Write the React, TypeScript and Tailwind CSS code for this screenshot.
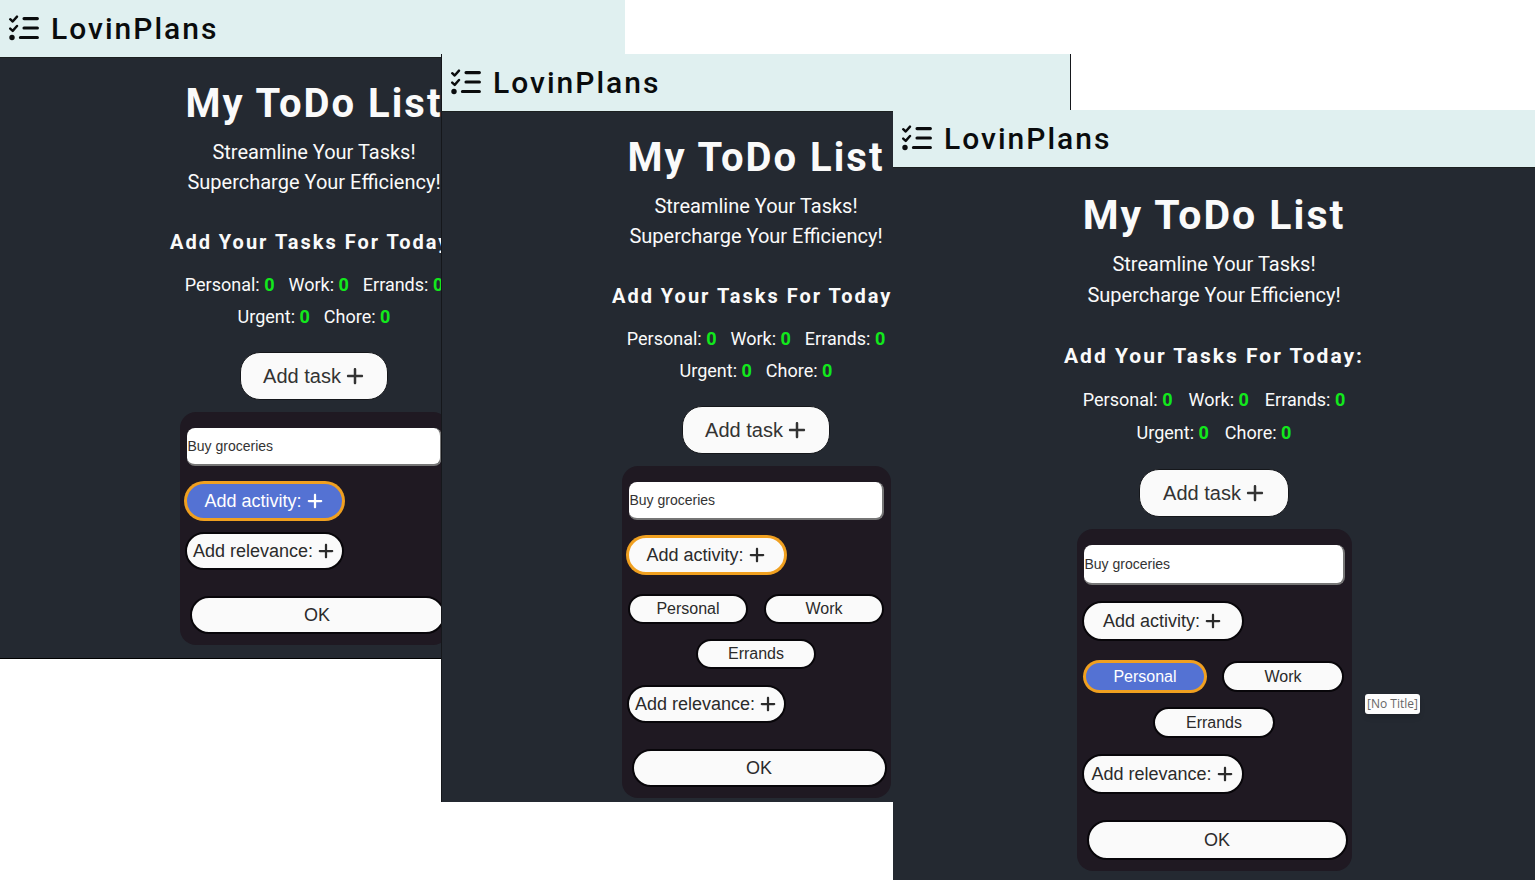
import { useId } from 'react';
import clsx from 'clsx';
import { FaPlus } from 'react-icons/fa6';

const pill = 'flex items-center justify-center rounded-full border-2 outline-none';
const plain = 'border-[#08060a] bg-[#fafafa] text-[#2b2b2b]';
const focused = 'border-[#f0a020] bg-[#fafafa] text-[#2b2b2b] ring-1 ring-[#f0a020]';
const picked = 'border-[#f0a020] bg-[#5472d3] text-white ring-1 ring-[#f0a020]';

type Focus = 'activity-active' | 'activity' | 'personal';

const activityStyle: Record<Focus, string> = {
  'activity-active': picked,
  activity: focused,
  personal: plain,
};

interface ScreenProps {
  className: string;
  focus: Focus;
  large?: boolean;
  choices?: boolean;
}

function ListCheckIcon() {
  return (
    <svg viewBox="0 0 32 28" className="h-7 w-8" fill="none" stroke="currentColor" strokeLinecap="round" strokeLinejoin="round">
      <path d="M2.2 4.2 4.7 6.5 9 1.6M2.2 13.6 4.7 15.9 9 11" strokeWidth="2.4" />
      <path d="M16 3.6H29.4M16 13H29.4M12.4 22.5H29.4" strokeWidth="3.1" />
      <circle cx="4" cy="22.5" r="2.7" fill="currentColor" stroke="none" />
    </svg>
  );
}

function Counter({ label }: { label: string }) {
  return (
    <li>
      {label}: <span className="font-bold text-[#12e81c]">0</span>
    </li>
  );
}

function Choice({ label, large, active }: { label: string; large: boolean; active?: boolean }) {
  return (
    <button
      type="button"
      className={clsx(
        pill,
        'text-base leading-5',
        large ? 'h-[31px] w-[122px]' : 'h-[30px] w-[120px]',
        active ? picked : plain,
      )}
    >
      {label}
    </button>
  );
}

function TodoScreen({ className, focus, large = false, choices = false }: ScreenProps) {
  const inputId = useId();
  const wide = large ? 'h-10 w-[162px]' : 'h-[38px] w-[159px]';
  return (
    <section className={clsx('absolute flex flex-col overflow-hidden bg-[#242931]', className)}>
      <header className="flex h-[58px] items-center gap-[11px] border-b border-[#1c2020] bg-[#e0f0f0] pl-2 text-[#0a0c0d]">
        <ListCheckIcon />
        <span className="text-[30px] leading-9 font-medium tracking-[2px]">LovinPlans</span>
      </header>

      <main className="flex flex-col items-center pt-[22px] text-center text-[#fafafa]">
        <h1 className={clsx('font-bold tracking-[2px]', large ? 'text-[41px] leading-[50px]' : 'text-[40px] leading-[48px]')}>
          My ToDo List
        </h1>
        <p className={clsx('mt-[9px] text-xl', large ? 'leading-[31px]' : 'leading-[30px]')}>
          Streamline Your Tasks!
          <br />
          Supercharge Your Efficiency!
        </p>
        <h2 className={clsx('mt-[33px] leading-6 font-bold tracking-[2px]', large ? 'text-[21px]' : 'text-xl')}>
          Add Your Tasks For Today:
        </h2>
        <ul
          className={clsx(
            'mt-[15px] flex max-w-[290px] flex-wrap justify-center text-lg',
            large ? 'gap-x-4 leading-[33px]' : 'gap-x-[14px] leading-8',
          )}
        >
          <Counter label="Personal" />
          <Counter label="Work" />
          <Counter label="Errands" />
          <Counter label="Urgent" />
          <Counter label="Chore" />
        </ul>

        <div className="flex flex-col items-center font-['Liberation_Sans',Arial,sans-serif]">
          <button
            type="button"
            className={clsx(
              'flex h-12 items-center justify-center gap-1 rounded-[20px] border border-[#15171b] bg-[#fafafa] text-xl text-[#333]',
              large ? 'mt-5 w-[150px]' : 'mt-[19px] w-[148px]',
            )}
          >
            Add task <FaPlus className="size-5" />
          </button>

          <form
            className={clsx(
              'mt-3 flex flex-col items-start rounded-2xl bg-[#1f1922] px-[5px] pt-4 pb-[11px]',
              large ? 'w-[275px]' : 'w-[269px]',
            )}
          >
            <input
              id={inputId}
              type="text"
              aria-label="Task"
              defaultValue="Buy groceries"
              className={clsx(
                'ml-[2px] rounded-lg border-r-2 border-b-2 border-[#767676] bg-white pl-[1px] text-sm text-[#333] outline-none',
                large ? 'h-10 w-[261px]' : 'h-[38px] w-[255px]',
              )}
            />
            <button type="button" className={clsx(pill, 'mt-4 gap-1 text-lg', wide, activityStyle[focus])}>
              Add activity: <FaPlus className="size-[18px]" />
            </button>
            {choices && (
              <div className="mt-5 mb-1 flex flex-wrap justify-center gap-x-4 gap-y-[15px] self-stretch">
                <Choice label="Personal" large={large} active={focus === 'personal'} />
                <Choice label="Work" large={large} />
                <Choice label="Errands" large={large} />
              </div>
            )}
            <button type="button" className={clsx(pill, plain, 'mt-3 gap-1 text-lg', wide)}>
              Add relevance: <FaPlus className="size-[18px]" />
            </button>
            <button
              type="submit"
              className={clsx(pill, plain, 'mt-[26px] ml-[5px] text-lg', large ? 'h-10 w-[261px]' : 'h-[38px] w-[255px]')}
            >
              OK
            </button>
          </form>
        </div>
      </main>
    </section>
  );
}

export default function App() {
  return (
    <div className="relative min-h-screen overflow-hidden bg-white font-[Roboto,sans-serif]">
      <TodoScreen className="top-0 left-0 w-[628px] border-b border-black pb-[13px]" focus="activity-active" />
      <div className="absolute top-0 left-[625px] h-[54px] w-1 bg-white" />
      <TodoScreen
        className="top-[54px] left-[441px] w-[630px] border-x border-[#15171b] pb-1"
        focus="activity"
        choices
      />
      <TodoScreen className="top-[110px] right-0 bottom-0 left-[893px]" focus="personal" large choices />
      <span className="absolute top-[694px] left-[1365px] rounded-[3px] bg-[#fdfdfd] px-[2px] font-['Open_Sans',sans-serif] text-xs leading-5 text-[#666] shadow-md">
        [No Title]
      </span>
    </div>
  );
}
